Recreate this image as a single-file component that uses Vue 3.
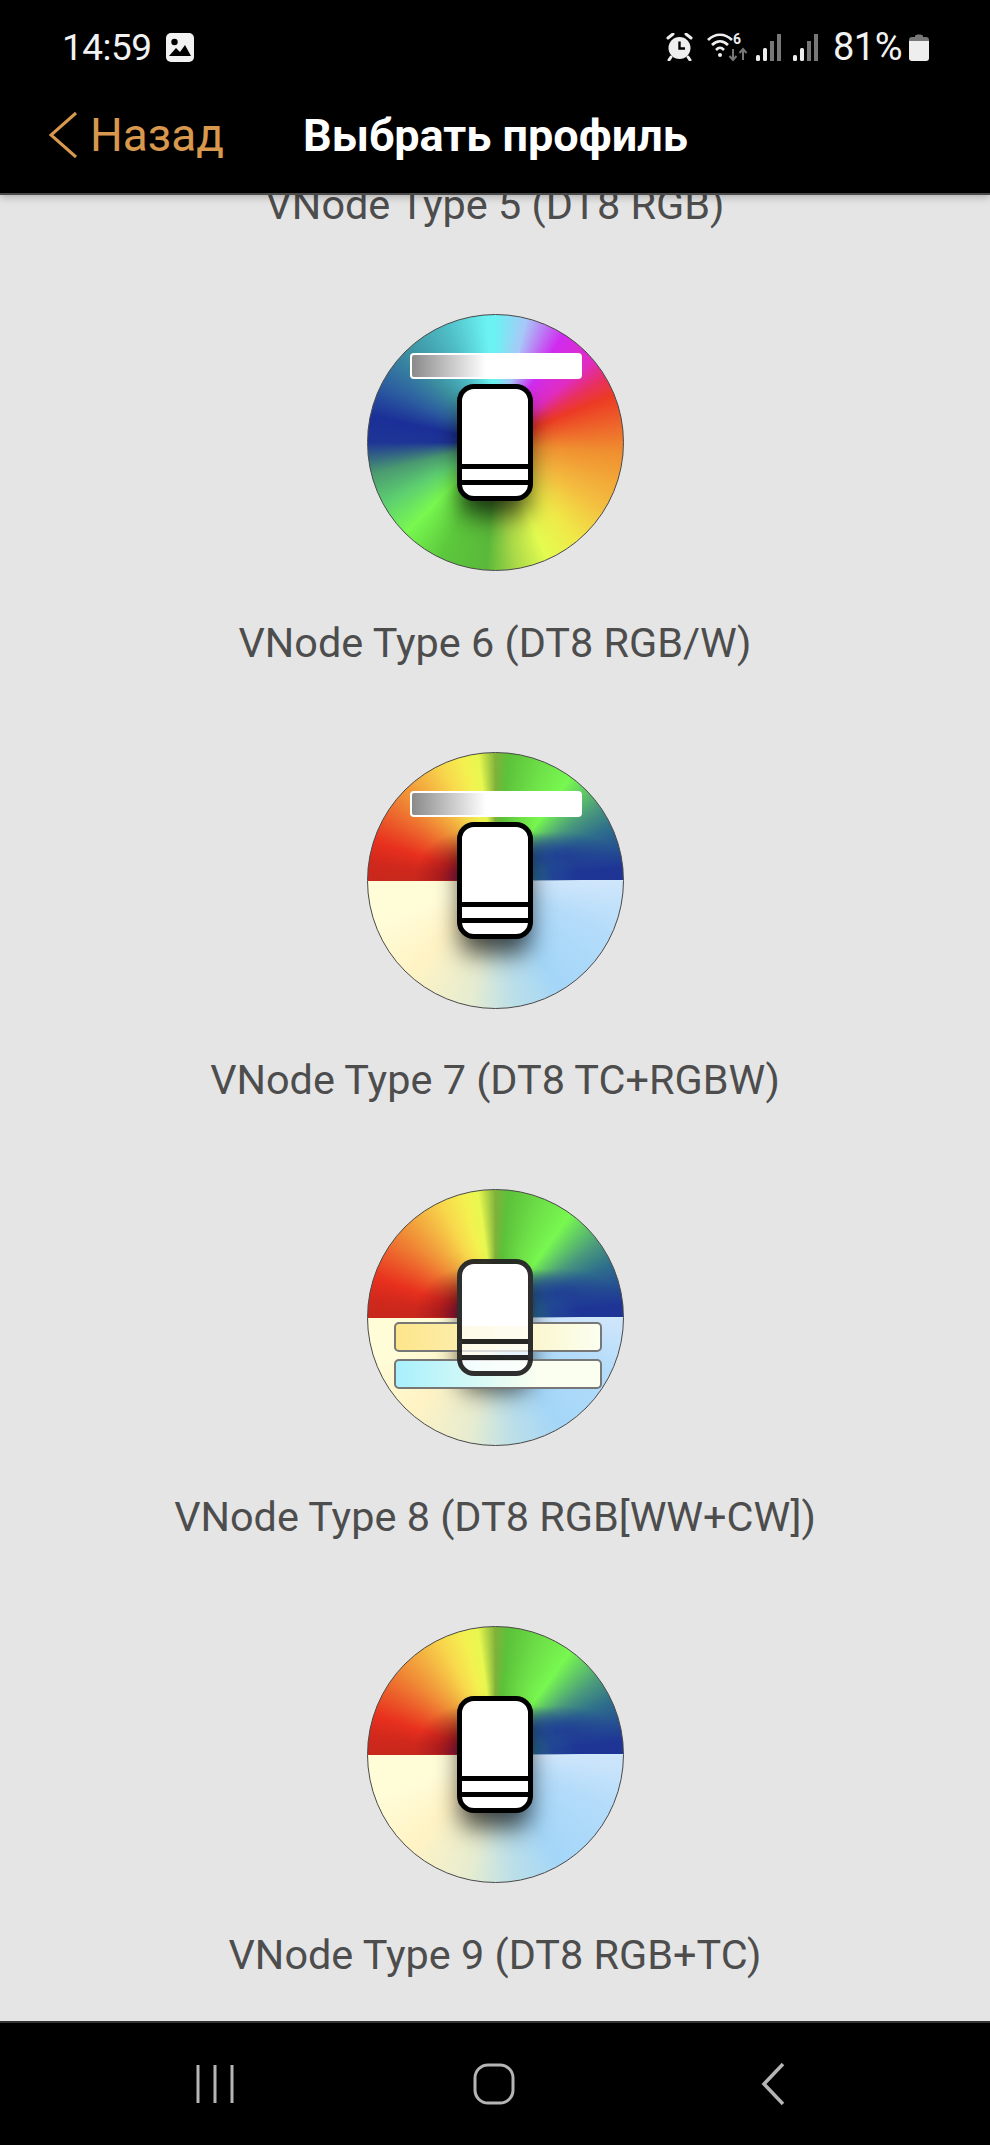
<script setup>
const profiles = [
  { id: 5, name: 'VNode Type 5 (DT8 RGB)', wheel: 'rainbow' },
  { id: 6, name: 'VNode Type 6 (DT8 RGB/W)', wheel: 'rainbow', white: true },
  { id: 7, name: 'VNode Type 7 (DT8 TC+RGBW)', wheel: 'split', white: true },
  { id: 8, name: 'VNode Type 8 (DT8 RGB[WW+CW])', wheel: 'split', tunable: true },
  { id: 9, name: 'VNode Type 9 (DT8 RGB+TC)', wheel: 'split' },
]
</script>

<template>
  <div class="screen">
    <header class="top">
      <div class="status">
        <span class="clock">14:59</span>
        <svg class="pic" width="28" height="29" viewBox="0 0 28 29">
          <rect width="28" height="29" rx="5" fill="#f2f2f2" />
          <circle cx="8.5" cy="9" r="3.2" fill="#000" />
          <path d="M3 23l7-8 4 4 5-7 6 11z" fill="#000" />
        </svg>
        <span class="status-right">
          <svg width="27" height="28" viewBox="0 0 27 28" fill="none">
            <path d="M2 5l5-4M25 5l-5-4" stroke="#eee" stroke-width="3" stroke-linecap="round" />
            <circle cx="13.5" cy="15" r="11" fill="#eee" />
            <path d="M13.5 8.5v7h5.5" stroke="#000" stroke-width="2.4" />
            <path d="M5 24l-2 3M22 24l2 3" stroke="#eee" stroke-width="3" stroke-linecap="round" />
          </svg>
          <svg class="wifi" width="42" height="30" viewBox="0 0 42 30" fill="none">
            <path d="M1 8c7-7 17-7 24 0M5 13c5-5 11-5 16 0M9 18c3-3 5-3 8 0" stroke="#eee" stroke-width="2.6" />
            <circle cx="13" cy="23" r="2" fill="#eee" />
            <text x="26" y="12" class="wifi-six">6</text>
            <path d="M26 17v11M22.500 24l3.500 4 3.500-4M36 28v-11M32.500 21l3.500-4 3.500 4" stroke="#777" stroke-width="2" />
          </svg>
          <svg class="signal" width="25" height="27" viewBox="0 0 25 27">
            <rect x="0" y="21" width="4" height="6" rx="1.500" fill="#eee" />
            <rect x="7" y="14" width="4" height="13" rx="1.500" fill="#eee" />
            <rect x="14" y="7" width="4" height="20" fill="#777" />
            <rect x="21" y="0" width="4" height="27" fill="#777" />
          </svg>
          <svg class="signal" width="25" height="27" viewBox="0 0 25 27">
            <rect x="0" y="21" width="4" height="6" rx="1.500" fill="#eee" />
            <rect x="7" y="14" width="4" height="13" rx="1.500" fill="#eee" />
            <rect x="14" y="7" width="4" height="20" fill="#777" />
            <rect x="21" y="0" width="4" height="27" fill="#777" />
          </svg>
          <span class="percent">81%</span>
          <svg class="battery" width="20" height="28" viewBox="0 0 20 28">
            <path d="M6 3c0-2 8-2 8 0v1h3q3 0 3 3v2H0V7q0-3 3-3h3z" fill="#777" />
            <path d="M0 8h20v17q0 3-3 3H3q-3 0-3-3z" fill="#eee" />
          </svg>
        </span>
      </div>
      <nav class="bar">
        <a class="back">
          <svg width="30" height="48" viewBox="0 0 30 48" fill="none">
            <path d="M28 2L3 24l25 22" stroke="#d8984e" stroke-width="3" />
          </svg>
          <span>Назад</span>
        </a>
        <h1 class="title">Выбрать профиль</h1>
      </nav>
    </header>

    <main class="scroller">
      <ul class="list">
        <li v-for="p in profiles" :key="p.id" class="item">
          <div class="wheel" :class="[p.wheel, { tunable: p.tunable }]">
            <div class="phone">
              <i></i>
              <i></i>
            </div>
            <div v-if="p.white" class="white-bar"></div>
            <template v-if="p.tunable">
              <div class="temp warm"></div>
              <div class="temp cold"></div>
            </template>
          </div>
          <p class="label">{{ p.name }}</p>
        </li>
      </ul>
    </main>

    <footer class="nav">
      <svg width="38" height="40" viewBox="0 0 38 40" fill="none" stroke="#b5b5b5" stroke-width="3">
        <path d="M2 1v38M19 1v38M36 1v38" />
      </svg>
      <svg width="42" height="42" viewBox="0 0 42 42" fill="none" stroke="#b5b5b5" stroke-width="3">
        <rect x="2" y="2" width="38" height="38" rx="13" />
      </svg>
      <svg width="24" height="42" viewBox="0 0 24 42" fill="none" stroke="#b5b5b5" stroke-width="3.500">
        <path d="M22 1L3 21l19 20" />
      </svg>
    </footer>
  </div>
</template>

<style>
html, body { margin: 0; background: #000; }
</style>

<style scoped>
.screen {
  width: 990px;
  height: 2145px;
  display: flex;
  flex-direction: column;
  overflow: hidden;
  background: #e5e5e5;
  font-family: Roboto, "Noto Sans", sans-serif;
}

.top {
  height: 193px;
  flex: none;
  background: #000;
  border-bottom: 2px solid #4a4a4a;
  box-shadow: 0 2px 8px rgba(0, 0, 0, 0.25);
  position: relative;
  z-index: 2;
}
.status {
  display: flex;
  align-items: center;
  height: 30px;
  padding: 32px 61px 0 62px;
  color: #f2f2f2;
}
.clock { font-size: 37px; letter-spacing: -0.5px; }
.percent { font-size: 38px; letter-spacing: -0.5px; margin-left: 3px; }
.pic { margin-left: 14px; }
.status-right { margin-left: auto; display: flex; align-items: center; gap: 12px; }
.status-right .wifi { margin-left: 2px; }
.status-right .wifi + .signal { margin-left: -5px; }
.status-right .battery { margin-left: -5px; }
.wifi-six { font: 700 14px Roboto, sans-serif; fill: #eee; }

.bar {
  display: flex;
  align-items: center;
  height: 60px;
  padding: 43px 0 0 48px;
}
.back { display: flex; align-items: center; gap: 12px; color: #d8984e; font-size: 46px; }
.title { margin: 0 0 0 79px; color: #fff; font-size: 45px; font-weight: 700; }

.scroller { flex: 1; overflow: hidden; }
.list { list-style: none; margin: -404px 0 0; padding: 0; }
.item {
  display: flex;
  flex-direction: column;
  align-items: center;
  padding-top: 86px;
  gap: 48.330px;
}
.label {
  margin: 0;
  color: #4d4d4d;
  font-size: 41.400px;
  line-height: 46px;
}

.wheel {
  position: relative;
  box-sizing: border-box;
  width: 257px;
  height: 257px;
  border-radius: 50%;
  border: 1px solid #4a4a4a;
  overflow: hidden;
  display: grid;
  place-items: center;
}
.rainbow {
  background: conic-gradient(#6cf2f2 0deg, #a8c8f8 14deg, #d02cf0 32deg, #e02cc0 50deg, #e8305c 60deg,
    #ec3a24 68deg, #f09030 95deg, #f4c040 122deg, #f0e848 140deg, #e4fb50 156deg, #a8d848 171deg, #5ab83a 184deg,
    #5cc83c 205deg, #78f850 225deg, #5ed070 241deg, #4a9a70 256deg, #1e3596 270deg, #1b2f98 282deg, #2c5ea0 297deg,
    #3c90a0 316deg, #50c0c8 338deg, #6cf2f2 356deg);
}
.split {
  background:
    radial-gradient(circle 48px at 37% 100%, rgba(130, 20, 70, 0.95), rgba(150, 20, 30, 0.6) 45%, transparent) top / 100% 50% no-repeat,
    radial-gradient(circle 50px at 63% 100%, rgba(45, 120, 150, 0.95), rgba(35, 80, 150, 0.6) 50%, transparent) top / 100% 50% no-repeat,
    radial-gradient(ellipse 60px 26px at 74% 82%, rgba(30, 53, 150, 0.9), transparent) top / 100% 50% no-repeat,
    conic-gradient(#7fb23a 0deg, #5cc23a 6deg, #6ee048 22deg, #78f850 36deg, #4a9a7c 54deg, #2e6f8c 65deg, #1e3596 84deg,
      #1e3596 90deg, #cfe6fb 90deg, #b4dcfa 115deg, #a4d6f8 150deg, #bcdfe8 172deg, #e6ecd0 192deg, #fff3c4 222deg,
      #fffcd8 250deg, #fffcd8 270deg, #c8281c 270deg, #d0281c 278deg, #e8301e 288deg, #f08a36 312deg, #f8d84c 335deg,
      #f4f050 345deg, #e8f850 352deg, #7fb23a 360deg);
}

.phone {
  box-sizing: border-box;
  width: 76px;
  height: 117px;
  border: 5px solid #000;
  border-radius: 17px;
  background: #fff;
  box-shadow: 0 18px 24px -3px rgba(0, 0, 0, 0.7);
  display: flex;
  flex-direction: column;
  justify-content: flex-end;
}
.phone i { display: block; height: 11px; border-top: 5px solid #000; }

/* type 8: shadow stays under the bars, bars show through the lower part of the phone */
.tunable::before {
  content: "";
  position: absolute;
  inset: 0;
  margin: auto;
  width: 76px;
  height: 117px;
  border-radius: 17px;
  box-shadow: 0 18px 24px -3px rgba(0, 0, 0, 0.7);
}
.tunable .phone {
  position: relative;
  z-index: 1;
  box-shadow: none;
  border-color: rgba(0, 0, 0, 0.82);
  background: linear-gradient(#fff 62px, rgba(255, 255, 255, 0.72) 62px);
}
.tunable .phone i { border-top-color: rgba(0, 0, 0, 0.85); }

.white-bar {
  position: absolute;
  top: 38px;
  left: 42px;
  box-sizing: border-box;
  width: 172px;
  height: 26px;
  border: 2px solid #fff;
  border-radius: 4px;
  background: linear-gradient(90deg, #8a8a8a, #fff 44%);
}
.temp {
  position: absolute;
  left: 26px;
  box-sizing: border-box;
  width: 208px;
  height: 30px;
  border: 2.500px solid #777;
  border-radius: 5px;
}
.warm { top: 132px; background: linear-gradient(90deg, #fde58a, #fbfff0); }
.cold { top: 169px; background: linear-gradient(90deg, #a8f0fd, #fbfff0 70%); }

.nav {
  height: 124px;
  flex: none;
  box-sizing: border-box;
  background: #000;
  border-top: 2px solid #333;
  display: flex;
  align-items: center;
  padding: 0 0 0 196px;
}
.nav svg:nth-child(2) { margin-left: 239px; }
.nav svg:nth-child(3) { margin-left: 246px; }
</style>
